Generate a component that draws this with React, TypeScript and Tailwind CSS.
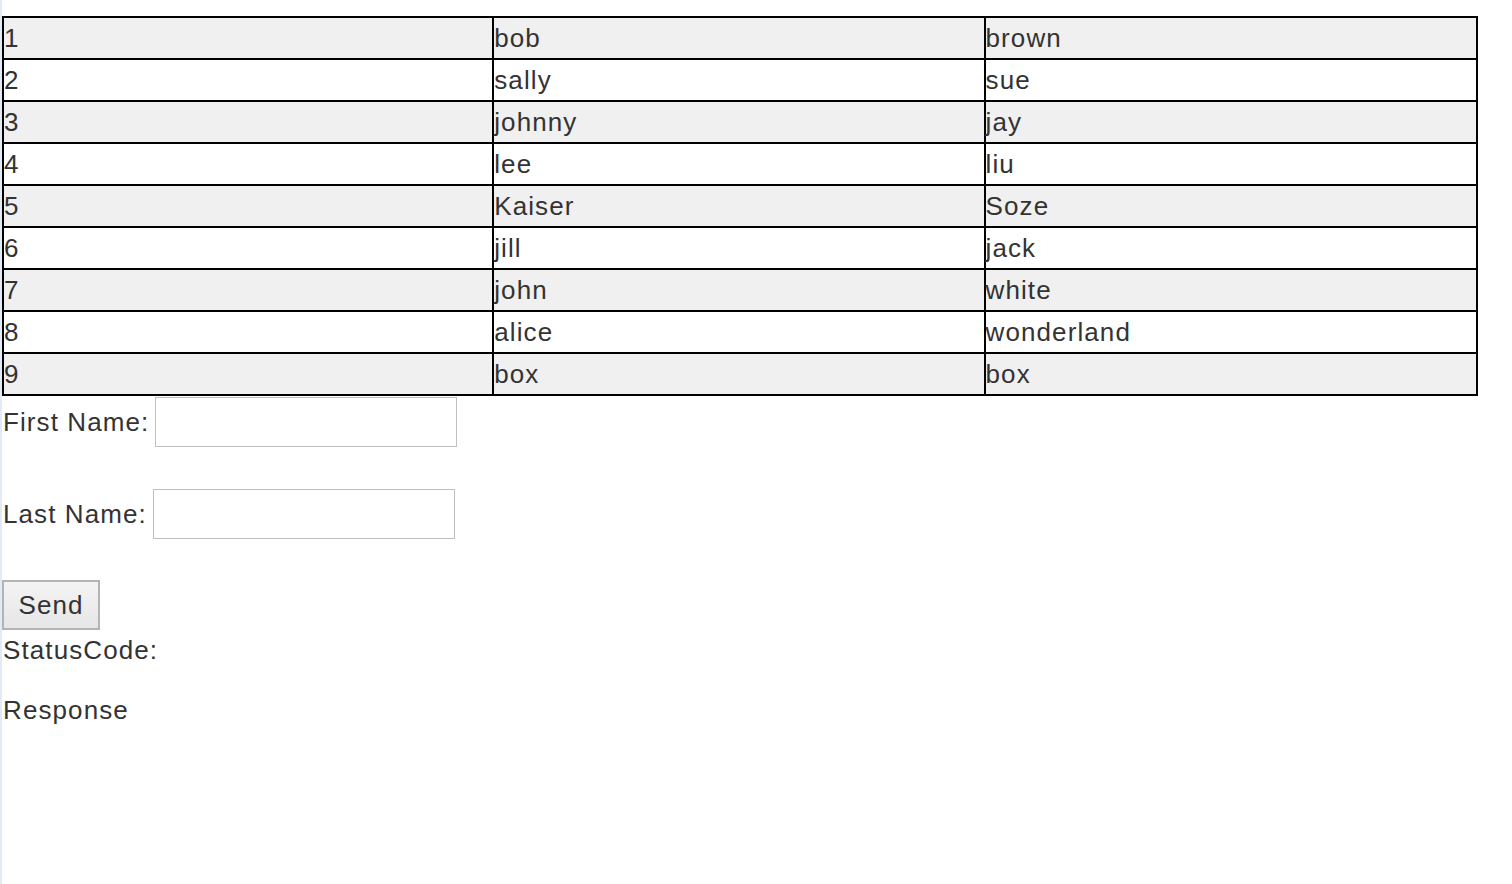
const people = [
  [1, 'bob', 'brown'],
  [2, 'sally', 'sue'],
  [3, 'johnny', 'jay'],
  [4, 'lee', 'liu'],
  [5, 'Kaiser', 'Soze'],
  [6, 'jill', 'jack'],
  [7, 'john', 'white'],
  [8, 'alice', 'wonderland'],
  [9, 'box', 'box'],
]

export default function App() {
  return (
    <div className="min-h-screen border-l-2 border-[#e2ebf5] bg-white font-['Liberation_Sans',Arial,sans-serif] text-[26px] leading-[30px] tracking-[1.1px] text-[#333]">
      <div className="pt-4">
        <table className="w-[1476px] border-collapse border-2 border-black">
          <tbody>
            {people.map(([id, first, last], i) => (
              <tr key={id} className={i % 2 === 0 ? 'h-[42px] bg-[#f0f0f0]' : 'h-[42px] bg-white'}>
                <td className="w-[491px] border-2 border-black p-0 align-middle">{id}</td>
                <td className="w-[492px] border-2 border-black p-0 align-middle">{first}</td>
                <td className="w-[493px] border-2 border-black p-0 align-middle">{last}</td>
              </tr>
            ))}
          </tbody>
        </table>
      </div>

      {/* Form */}
      <form className="flex flex-col pl-[1px]" onSubmit={(e) => e.preventDefault()}>
        <label className="flex items-center">
          <span>First Name:</span>
          <input type="text" className="my-[1px] ml-[6px] h-[50px] w-[302px] border border-[#c0c0c0] bg-white" />
        </label>
        <label className="mt-10 flex items-center">
          <span>Last Name:</span>
          <input type="text" className="my-[1px] ml-[6px] h-[50px] w-[302px] border border-[#c0c0c0] bg-white" />
        </label>
        <div className="mt-10">
          <button
            type="submit"
            className="-ml-[1px] h-[50px] w-[98px] border-2 border-[#b4b4b4] bg-gradient-to-b from-[#f4f4f4] to-[#e6e6e6] text-[#333]"
          >
            Send
          </button>
        </div>
      </form>

      <div className="pl-[1px]">
        <p className="mt-[5px]">StatusCode:</p>
        <p className="mt-[30px]">Response</p>
      </div>
    </div>
  )
}
